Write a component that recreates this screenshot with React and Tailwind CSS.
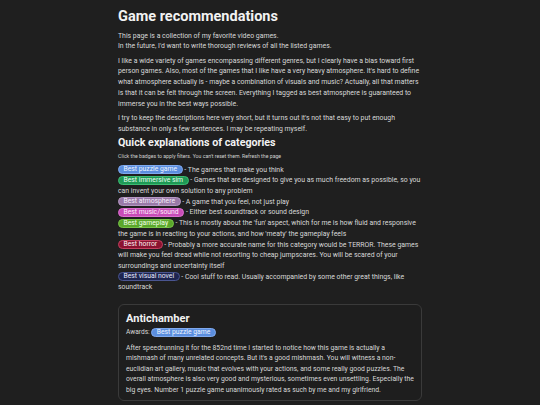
const BADGES = {
  puzzle: { label: "Best puzzle game", cls: "bg-[#5b8ede] border-[#7fa9ee] text-[#eef4ff]" },
  immersive: { label: "Best immersive sim", cls: "bg-[#1e9a55] border-[#3dbb72] text-[#eafff1]" },
  atmosphere: { label: "Best atmosphere", cls: "bg-[#9a7aa8] border-[#b597c2] text-[#f6eefa]" },
  music: { label: "Best music/sound", cls: "bg-[#c74cb7] border-[#dd6ecf] text-[#fff0fc]" },
  gameplay: { label: "Best gameplay", cls: "bg-[#5aa72a] border-[#76c246] text-[#f2ffe8]" },
  horror: { label: "Best horror", cls: "bg-[#8b1230] border-[#c2405f] text-[#ffeef2]" },
  visual: { label: "Best visual novel", cls: "bg-[#1e2550] border-[#4a5590] text-[#e6eaff]" },
};

const CATEGORIES = [
  { key: "puzzle", text: "The games that make you think" },
  {
    key: "immersive",
    text: "Games that are designed to give you as much freedom as possible, so you can invent your own solution to any problem",
  },
  { key: "atmosphere", text: "A game that you feel, not just play" },
  { key: "music", text: "Either best soundtrack or sound design" },
  {
    key: "gameplay",
    text: "This is mostly about the 'fun' aspect, which for me is how fluid and responsive the game is in reacting to your actions, and how 'meaty' the gameplay feels",
  },
  {
    key: "horror",
    text: "Probably a more accurate name for this category would be TERROR. These games will make you feel dread while not resorting to cheap jumpscares. You will be scared of your surroundings and uncertainty itself",
  },
  { key: "visual", text: "Cool stuff to read. Usually accompanied by some other great things, like soundtrack" },
];

function Badge({ type }) {
  const b = BADGES[type];
  return (
    <span
      className={`inline-block cursor-pointer rounded-full border px-[4.5px] align-middle text-[6.8px] leading-[7px] ${b.cls}`}
    >
      {b.label}
    </span>
  );
}

export default function App() {
  return (
    <div
      className="min-h-screen bg-[#1f1f1f] text-[#d8d8d8]"
      style={{ fontFamily: "Roboto, 'Liberation Sans', sans-serif" }}
    >
      <div className="mx-auto w-[304px] pt-[8px]">
        <h1 className="text-[14.5px] font-bold leading-[18px] text-[#f2f2f2]">Game recommendations</h1>

        <p className="mt-[4.5px] text-[6.9px] leading-[10.8px]">
          This page is a collection of my favorite video games.
          <br />
          In the future, I'd want to write thorough reviews of all the listed games.
        </p>
        <p className="mt-[3.5px] text-[6.9px] leading-[10.8px]">
          I like a wide variety of games encompassing different genres, but I clearly have a bias toward first person
          games. Also, most of the games that I like have a very heavy atmosphere. It's hard to define what atmosphere
          actually is - maybe a combination of visuals and music? Actually, all that matters is that it can be felt
          through the screen. Everything I tagged as best atmosphere is guaranteed to immerse you in the best ways
          possible.
        </p>
        <p className="mt-[3.2px] text-[6.9px] leading-[10.8px]">
          I try to keep the descriptions here very short, but it turns out it's not that easy to put enough substance in
          only a few sentences. I may be repeating myself.
        </p>

        <h2 className="mt-[2px] text-[10.7px] font-bold leading-[13px] text-[#f2f2f2]">
          Quick explanations of categories
        </h2>
        <p className="mt-[3px] text-[5.2px] leading-[8px] text-[#cfcfcf]">
          Click the badges to apply filters. You can't reset them. Refresh the page
        </p>

        <ul className="mt-[4.3px] text-[6.9px] leading-[10.7px]">
          {CATEGORIES.map((c) => (
            <li key={c.key}>
              <Badge type={c.key} /> - {c.text}
            </li>
          ))}
        </ul>

        <div className="mt-[11px] rounded-[6px] border border-[#3a3a3a] bg-[#1e1e1e] px-[7px] pt-[7px] pb-[5px]">
          <h3 className="text-[11px] font-bold leading-[14px] text-[#f2f2f2]">Antichamber</h3>
          <div className="mt-[1px] text-[6.6px] leading-[11px]">
            Awards: <Badge type="puzzle" />
          </div>
          <p className="mt-[4.5px] text-[6.8px] leading-[10.5px]">
            After speedrunning it for the 852nd time I started to notice how this game is actually a mishmash of many
            unrelated concepts. But it's a good mishmash. You will witness a non-euclidian art gallery, music that
            evolves with your actions, and some really good puzzles. The overall atmosphere is also very good and
            mysterious, sometimes even unsettling. Especially the big eyes. Number 1 puzzle game unanimously rated as
            such by me and my girlfriend.
          </p>
        </div>
      </div>
    </div>
  );
}
